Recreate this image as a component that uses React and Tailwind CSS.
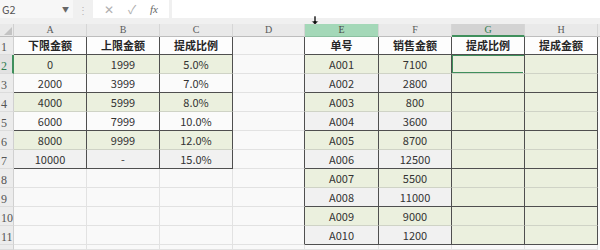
import React from "react";

const DATA = [
  ["下限金额", "上限金额", "提成比例", "", "单号", "销售金额", "提成比例", "提成金额"],
  ["0", "1999", "5.0%", "", "A001", "7100", "", ""],
  ["2000", "3999", "7.0%", "", "A002", "2800", "", ""],
  ["4000", "5999", "8.0%", "", "A003", "800", "", ""],
  ["6000", "7999", "10.0%", "", "A004", "3600", "", ""],
  ["8000", "9999", "12.0%", "", "A005", "8700", "", ""],
  ["10000", "-", "15.0%", "", "A006", "12500", "", ""],
  ["", "", "", "", "A007", "5500", "", ""],
  ["", "", "", "", "A008", "11000", "", ""],
  ["", "", "", "", "A009", "9000", "", ""],
  ["", "", "", "", "A010", "1200", "", ""],
  ["", "", "", "", "", "", "", ""],
];

const COLS = ["A", "B", "C", "D", "E", "F", "G", "H"];

function inLeft(r, c) {
  return c <= 2 && r >= 1 && r <= 7;
}
function inRight(r, c) {
  return c >= 4 && r >= 1 && r <= 11;
}

function bgClass(r, c) {
  if (inLeft(r, c)) {
    if (r === 1) return "bg-[#fdfdfd]";
    if (r % 2 === 0) return "bg-[#ebf0de]";
    if (r === 7) return "bg-[#f1f1f1]";
    return "bg-[#fbfbfb]";
  }
  if (inRight(r, c)) {
    if (r === 1) return "bg-[#fdfdfd]";
    if (c >= 6) return "bg-[#ebf0de]";
    if (r % 2 === 0) return "bg-[#ebf0de]";
    return "bg-[#f1f1f1]";
  }
  return "bg-[#f9f9f9]";
}

function rightBorder(r, c) {
  if (inLeft(r, c) || inRight(r, c)) return "border-r-[#4f4f4f]";
  if (c === 3 && r >= 1 && r <= 11) return "border-r-[#4f4f4f]";
  return "border-r-[#e2e2e2]";
}

function bottomBorder(r, c) {
  if (inLeft(r, c) || inRight(r, c)) {
    if (r % 2 === 1) return "border-b-[#4f4f4f]";
    return "border-b-[#cfd3c6]";
  }
  return "border-b-[#e2e2e2]";
}

function Cell({ r, c, text }) {
  const bold = r === 1 && (inLeft(r, c) || inRight(r, c));
  const h = r === 1 ? "h-[18px]" : r === 11 ? "h-[19px]" : r === 12 ? "h-[5px]" : "h-[19px]";
  return (
    <div
      className={`relative flex items-center justify-center border-r border-b ${h} ${bgClass(r, c)} ${rightBorder(r, c)} ${bottomBorder(r, c)} ${
        bold ? "font-bold text-[#262626]" : "text-[#333333]"
      } text-[11px] leading-none overflow-hidden`}
    >
      {text}
      {r === 2 && c === 6 && (
        <div className="absolute -left-px -top-px w-[75px] h-[20px] border-2 border-[#3f8f5c]">
          <div className="absolute -right-[3px] -bottom-[3px] w-[4px] h-[4px] bg-[#3f8f5c] border border-white" />
        </div>
      )}
    </div>
  );
}

function RowHeader({ r }) {
  const h = r === 1 ? "h-[18px]" : r === 12 ? "h-[5px]" : "h-[19px]";
  const sel = r === 2;
  return (
    <div
      className={`flex items-end pb-[1px] pl-[1px] border-b border-r ${h} ${
        sel ? "bg-[#e2e2e2] text-[#2f7d4f] border-r-[#3f8f5c] border-r-2" : "bg-[#ececec] text-[#555555] border-r-[#d0d0d0]"
      } border-b-[#dcdcdc] text-[12px] leading-none overflow-hidden`}
      style={{ fontFamily: '"Liberation Serif", serif' }}
    >
      {r <= 11 ? r : ""}
    </div>
  );
}

function ColHeader({ c }) {
  let cls = "bg-[#e9e9e9] text-[#5a5a5a] border-b-[#bdbdbd]";
  if (c === 4) cls = "bg-[#a4d8b8] text-[#4a4a4a] border-b-[#8bbf9f]";
  if (c === 6) cls = "bg-[#d3d3d3] text-[#2f7d4f] border-b-[#3f8f5c] border-b-2";
  return (
    <div
      className={`h-[13px] flex items-center justify-center border-r border-r-[#d6d6d6] border-b ${cls} text-[10px] leading-none`}
      style={{ fontFamily: '"Liberation Serif", serif' }}
    >
      {COLS[c]}
    </div>
  );
}

export default function App() {
  return (
    <div
      className="w-[600px] h-[250px] overflow-hidden bg-[#f0f0f0] relative"
      style={{ fontFamily: '"Noto Sans CJK SC", "Noto Sans", sans-serif' }}
    >
      {/* formula bar */}
      <div className="h-[18px] flex items-stretch">
        <div className="w-[73px] bg-[#f7f7f7] flex items-center justify-between pl-[2px] pr-[4px] text-[11px] text-[#555555]">
          <span>G2</span>
          <span className="text-[7px] text-[#666666]">▼</span>
        </div>
        <div className="w-[20px] flex items-center justify-center text-[#b5b5b5] text-[10px]">⋮</div>
        <div className="w-[76px] bg-white flex items-center justify-around text-[#b0b0b0] text-[11px] px-[4px]">
          <span className="text-[12px]">✕</span>
          <span className="text-[12px]">✓</span>
          <span className="italic text-[#666666]" style={{ fontFamily: '"Liberation Serif", serif' }}>
            fx
          </span>
        </div>
        <div className="w-[3px]" />
        <div className="flex-1 bg-white" />
      </div>
      <div className="h-[6px]" />

      {/* grid */}
      <div className="grid grid-cols-[14px_73px_73px_73px_72px_74px_73px_73px_73px_2px]">
        {/* corner */}
        <div className="h-[13px] bg-[#e9e9e9] border-r border-b border-r-[#d0d0d0] border-b-[#bdbdbd] flex items-end justify-end pr-[1px] pb-[1px]">
          <div className="w-0 h-0 border-l-[8px] border-l-transparent border-b-[8px] border-b-[#c3c3c3]" />
        </div>
        {COLS.map((_, c) => (
          <ColHeader key={c} c={c} />
        ))}
        <div className="h-[13px] bg-[#e9e9e9] border-b border-b-[#bdbdbd]" />

        {DATA.map((row, i) => {
          const r = i + 1;
          return (
            <React.Fragment key={r}>
              <RowHeader r={r} />
              {row.map((t, c) => (
                <Cell key={c} r={r} c={c} text={t} />
              ))}
              <div className="bg-[#f9f9f9]" />
            </React.Fragment>
          );
        })}
      </div>

      {/* cursor arrow over column E */}
      <svg className="absolute left-[311px] top-[16px]" width="8" height="9" viewBox="0 0 8 9">
        <path d="M3 0 H5 V5 H7.5 L4 9 L0.5 5 H3 Z" fill="#111" stroke="#fff" strokeWidth="0.6" />
      </svg>
    </div>
  );
}
